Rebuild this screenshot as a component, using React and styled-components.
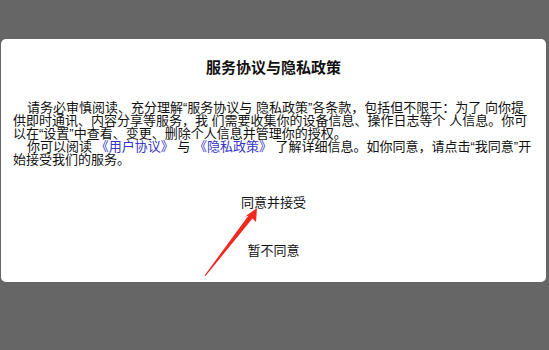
import React from 'react'
import styled, { createGlobalStyle } from 'styled-components'

const GlobalStyle = createGlobalStyle`
  html, body {
    margin: 0;
    padding: 0;
    background: #666666;
  }
  body {
    font-family: "Liberation Sans", "Noto Sans CJK SC", sans-serif;
    color: #111;
  }
`

const Screen = styled.div`
  position: relative;
  width: 549px;
  height: 350px;
  background: #666666;
  padding-top: 39px;
  box-sizing: border-box;
`

const Dialog = styled.div`
  margin: 0 3px 0 1px;
  height: 243px;
  box-sizing: border-box;
  background: #fff;
  border-radius: 5px;
  padding: 18px 12px 0;
  display: flex;
  flex-direction: column;
`

const Title = styled.h2`
  margin: 0;
  font-size: 15px;
  line-height: 22px;
  font-weight: bold;
  text-align: center;
  color: #111;
`

const Body = styled.div`
  margin-top: 22px;
  font-size: 13px;
  line-height: 13px;
`

const Para = styled.p`
  margin: 0;
  text-indent: 14px;
`

const Link = styled.span`
  color: #3535c8;
`

const Actions = styled.div`
  margin-top: 29px;
  display: flex;
  flex-direction: column;
  align-items: center;
  gap: 32px;
`

const ActionButton = styled.button`
  border: none;
  background: none;
  padding: 0;
  font-family: inherit;
  font-size: 13px;
  line-height: 16px;
  color: #111;
  cursor: pointer;
`

const Arrow = styled.svg`
  position: absolute;
  left: 200px;
  top: 200px;
`

export default function App () {
  return (
    <Screen>
      <GlobalStyle />
      <Dialog>
        <Title>服务协议与隐私政策</Title>
        <Body>
          <Para>
            请务必审慎阅读、充分理解“服务协议与 隐私政策”各条款，包括但不限于：为了 向你提供即时通讯、内容分享等服务，我 们需要收集你的设备信息、操作日志等个 人信息。你可以在“设置”中查看、变更、删除个人信息并管理你的授权。
          </Para>
          <Para>
            你可以阅读 <Link>《用户协议》</Link> 与 <Link>《隐私政策》</Link> 了解详细信息。如你同意，请点击“我同意”开始接受我们的服务。
          </Para>
        </Body>
        <Actions>
          <ActionButton>同意并接受</ActionButton>
          <ActionButton>暂不同意</ActionButton>
        </Actions>
      </Dialog>
      <Arrow width="70" height="80" viewBox="200 200 70 80">
        <polygon
          points="257,208 256,222 252.5,218.5 205.5,276 204.5,275.5 248.5,215.5 244.5,217"
          fill="#f0281e"
        />
      </Arrow>
    </Screen>
  )
}
